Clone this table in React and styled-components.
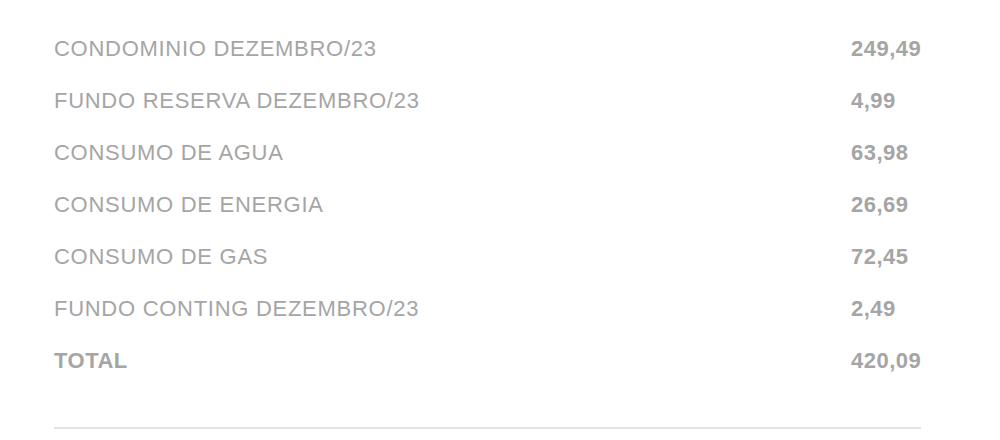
import * as React from "react"
import styled, { createGlobalStyle } from "styled-components"

const GlobalStyle = createGlobalStyle`
  body {
    margin: 0;
    background: #fff;
    font-family: "Liberation Sans", Arial, sans-serif;
  }
`

const Wrapper = styled.div`
  width: 867px;
  padding: 23px 0 0 54px;
`

const Row = styled.div`
  display: flex;
  justify-content: space-between;
  align-items: center;
  height: 52px;
  font-size: 22px;
  color: #a5a5a5;
`

const Label = styled.span`
  font-weight: ${p => (p.$bold ? 700 : 400)};
  letter-spacing: ${p => (p.$bold ? "0.5px" : "0.72px")};
`

const Value = styled.span`
  width: 70px;
  font-weight: 700;
  letter-spacing: 0.5px;
  white-space: nowrap;
`

const Divider = styled.hr`
  margin: 40px 0 0;
  border: 0;
  border-top: 2px solid #e4e4e4;
`

const items = [
  ["CONDOMINIO DEZEMBRO/23", "249,49"],
  ["FUNDO RESERVA DEZEMBRO/23", "4,99"],
  ["CONSUMO DE AGUA", "63,98"],
  ["CONSUMO DE ENERGIA", "26,69"],
  ["CONSUMO DE GAS", "72,45"],
  ["FUNDO CONTING DEZEMBRO/23", "2,49"],
]

const App = () => (
  <>
    <GlobalStyle />
    <Wrapper>
      {items.map(([label, value]) => (
        <Row key={label}>
          <Label>{label}</Label>
          <Value>{value}</Value>
        </Row>
      ))}
      <Row>
        <Label $bold>TOTAL</Label>
        <Value>420,09</Value>
      </Row>
      <Divider />
    </Wrapper>
  </>
)

export default App
